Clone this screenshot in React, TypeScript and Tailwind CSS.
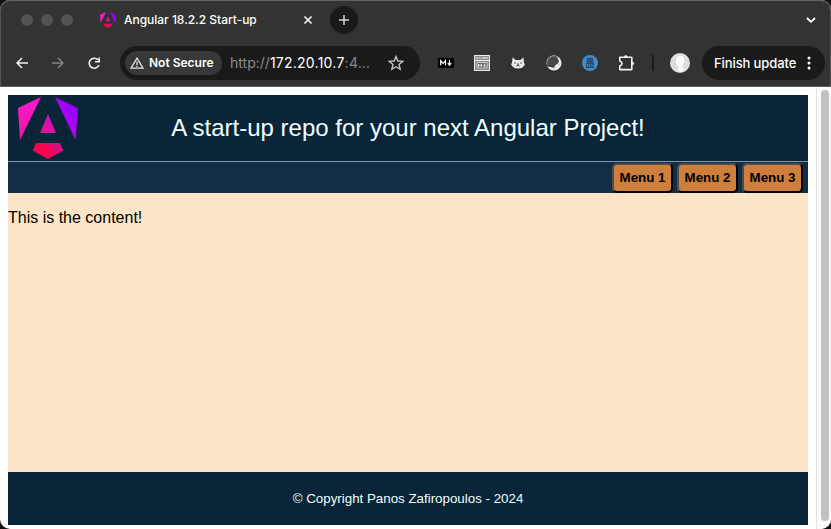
import React from "react";

function AngularMark({ id, className }: { id: string; className: string }) {
  return (
    <svg viewBox="0 0 60 62" className={className} preserveAspectRatio="none">
      <defs>
        <linearGradient id={id + "a"} x1="10" y1="50" x2="60" y2="14" gradientUnits="userSpaceOnUse">
          <stop offset="0" stopColor="#f0168f" />
          <stop offset="0.35" stopColor="#e516b4" />
          <stop offset="0.7" stopColor="#b800f5" />
          <stop offset="1" stopColor="#8f00ff" />
        </linearGradient>
        <linearGradient id={id + "c"} x1="2" y1="43" x2="14" y2="4" gradientUnits="userSpaceOnUse">
          <stop offset="0" stopColor="#f0189a" />
          <stop offset="1" stopColor="#f81ad0" />
        </linearGradient>
        <linearGradient id={id + "d"} x1="22" y1="36" x2="34" y2="18" gradientUnits="userSpaceOnUse">
          <stop offset="0" stopColor="#e4128c" />
          <stop offset="1" stopColor="#cf10c4" />
        </linearGradient>
        <linearGradient id={id + "b"} x1="22" y1="58" x2="44" y2="44" gradientUnits="userSpaceOnUse">
          <stop offset="0.35" stopColor="#f6044f" />
          <stop offset="1" stopColor="#bd12a6" />
        </linearGradient>
      </defs>
      <path fill={`url(#${id}c)`} d="M0 11 L23 0 L2 43 Z" />
      <path fill={`url(#${id}a)`} d="M37 0 L60 11 L57.5 43 Z" />
      <path fill={`url(#${id}d)`} d="M30 17 L38 36 H22 Z" />
      <path fill={`url(#${id}b)`} d="M18 46 H42 L45.5 53.5 L30 62 L14.5 53.5 Z" />
    </svg>
  );
}

function TabBar() {
  return (
    <div className="flex h-10 items-center pl-[21px] pr-[15px]">
      <div className="flex gap-2">
        <span className="size-3 rounded-full bg-[#535353]" />
        <span className="size-3 rounded-full bg-[#535353]" />
        <span className="size-3 rounded-full bg-[#535353]" />
      </div>
      <AngularMark id="tab" className="ml-[27px] h-4 w-4" />
      <span className="ml-2 w-[180px] whitespace-nowrap text-[12px] font-medium leading-4 tracking-[-0.02px] text-white">
        Angular 18.2.2 Start-up
      </span>
      <svg viewBox="0 0 8 8" className="size-2" fill="none" stroke="#e8e8e8" strokeWidth="1.6">
        <path d="M.5 .5 7.5 7.5M7.5 .5 .5 7.5" />
      </svg>
      <span className="ml-[18px] flex size-7 items-center justify-center rounded-full bg-[#1a1a1a]">
        <svg viewBox="0 0 10 10" className="size-2.5" stroke="#d6d6d6" strokeWidth="1.5">
          <path d="M5 0V10M0 5H10" />
        </svg>
      </span>
      <svg viewBox="0 0 10 6" className="ml-auto h-1.5 w-2.5" fill="none" stroke="#fff" strokeWidth="1.8">
        <path d="M1 1 5 4.8 9 1" />
      </svg>
    </div>
  );
}

function AddressBar() {
  return (
    <div className="ml-[19px] flex h-[34px] w-[300px] items-center rounded-full bg-[#1a1a1a] pl-[5px]">
      <span className="flex h-6 w-[97px] items-center rounded-full bg-[#383838] pl-[5px]">
        <svg viewBox="0 0 14 12" className="h-3 w-3.5" fill="none" stroke="#e4e4e4" strokeWidth="1.3">
          <path d="M7 1.2 13 11.2H1Z" />
          <path d="M7 4.5V8M7 8.8V10" />
        </svg>
        <span className="ml-[5px] whitespace-nowrap text-[12px] font-semibold leading-4 text-white">
          Not Secure
        </span>
      </span>
      <span className="ml-2 w-[158px] whitespace-nowrap text-[14px] leading-5 tracking-[0.01px] text-[#8d8d8d]">
        http://<span className="tracking-[0.25px] text-white">172.20.10.7</span>
        <span className="tracking-[0.3px]">:4…</span>
      </span>
      <svg viewBox="0 0 16 16" className="size-4" fill="none" stroke="#c4c4c4" strokeWidth="1.4">
        <path d="M8 1.5 9.8 6 14.8 6.3 11 9.5 12.2 14.3 8 11.7 3.8 14.3 5 9.5 1.2 6.3 6.2 6Z" />
      </svg>
    </div>
  );
}

function Extensions() {
  return (
    <div className="ml-[18px] flex items-center">
      <svg viewBox="0 0 16 10" className="h-2.5 w-4">
        <rect width="16" height="10" rx="1" fill="#000" />
        <path d="M2.7 7.3V2.7L5.1 5.4 7.5 2.7V7.3M11.5 2.3V7M9.8 5.2 11.5 7.2 13.2 5.2" fill="none" stroke="#fff" strokeWidth="1.2" />
      </svg>
      <svg viewBox="0 0 16 16" className="ml-5 size-4">
        <path d="M0 0H16V16H0Z" fill="#ececec" />
        <path d="M1 1H15V15H1Z" fill="#8b8b8b" />
        <path d="M2 3H4M5 3H7M8 3H14" stroke="#fff" strokeWidth="1.2" />
        <path d="M1 5.5H15" stroke="#eee" strokeWidth="1" />
        <path d="M3 7.5H13V13H3Z" fill="#666" stroke="#ddd" strokeWidth=".8" />
        <path d="M4.5 12V9L6 10.8 7.5 9V12M10.5 8.7V11.5M9.2 10.3 10.5 11.8 11.8 10.3" fill="none" stroke="#fff" strokeWidth=".8" />
      </svg>
      <svg viewBox="0 0 14 12" className="ml-[21px] h-3 w-3.5">
        <path d="M1.6 .5 4.7 3H9.3L12.4 .5 13 6 14 7.3 12.8 9 10.8 11 7 11.5 3.2 11 1.2 9 0 7.3 1 6Z" fill="#e9e9e9" />
        <path d="M4 5.3V6.7M10 5.3V6.7M6.3 7H7.7M5.5 9 7 8 8.5 9" fill="none" stroke="#222" />
      </svg>
      <svg viewBox="0 0 16 16" className="ml-[21px] size-4">
        <circle cx="8" cy="8" r="7.5" fill="#ededed" />
        <path d="M1 8A7 7 0 0 1 11 1.5L12 4 13 6 12 8.5 9.5 10 8.5 12.5 5 11.5 1.5 11Z" fill="#494949" />
        <path d="M1 6.2A7 7 0 0 1 9.5 1M9 10.5 8 14M12 8.5 13.5 10" fill="none" stroke="#aaa" strokeWidth=".8" />
        <path d="M1.2 10.8 3.5 11 7.5 12.2" fill="none" stroke="#151515" />
      </svg>
      <svg viewBox="0 0 16 16" className="ml-5 size-4">
        <circle cx="8" cy="8" r="8" fill="#448bcb" />
        <path d="M5.3 7V3.2H10.7V7Z" fill="#30567b" stroke="#263e56" strokeWidth=".8" />
        <path d="M4 7.4H12V13H4Z" fill="#2b4a69" />
        <path d="M5.2 12V9.2L6.3 10.5 7.4 9.2V12M10 9V11.7M9 10.5 10 11.7 11 10.5" fill="none" stroke="#448bcb" strokeWidth=".8" />
      </svg>
      <svg viewBox="0 0 18 18" className="ml-5 h-[18px] w-[18px]" fill="none" stroke="#f1f1f1" strokeWidth="1.6" strokeLinejoin="round">
        <path d="M1.8 3.2H13.8V15.6H1.8V12Q4 11.2 4 9.5T1.8 7Z" />
        <path d="M6.4 3Q6.4 1.6 7.8 1.6T9.2 3ZM14 8Q15.7 8 15.7 9.4T14 10.8Z" fill="#f1f1f1" strokeWidth=".8" />
      </svg>
    </div>
  );
}

function Toolbar() {
  return (
    <div className="flex h-[46px] items-center pl-4">
      <svg viewBox="0 0 12 12" className="size-3" fill="none" stroke="#f1f1f1" strokeWidth="1.5">
        <path d="M12 6H1M6 1 1 6 6 11" />
      </svg>
      <svg viewBox="0 0 12 12" className="ml-6 size-3" fill="none" stroke="#858585" strokeWidth="1.5">
        <path d="M0 6H11M6 1 11 6 6 11" />
      </svg>
      <svg viewBox="0 0 13 13" className="ml-6 size-[13px]" fill="none" stroke="#f1f1f1" strokeWidth="1.6">
        <path d="M10 2.9A5 5 0 1 0 10.9 8M11.2 .5V4.7H7" />
      </svg>
      <AddressBar />
      <Extensions />
      <span className="ml-4 h-4 w-0.5 bg-[#1b1b1b]" />
      <svg viewBox="0 0 20 20" className="ml-4 size-5">
        <circle cx="10" cy="10" r="10" fill="#dedede" />
        <path d="M10 3C6.5 3 5.8 5.4 6 8.4 6.2 12 8 13 8.2 14 8 17 8.5 18.7 10 19 12 19 14.2 17.5 14 15.5 12.3 15.2 12.3 14.4 12.8 12.4 15.5 8 15 3 10 3Z" fill="#f8fbfd" />
      </svg>
      <span className="ml-3 flex h-[34px] w-[123px] items-center rounded-full bg-[#1a1a1a] pl-3">
        <span className="w-[93px] whitespace-nowrap text-[13px] font-medium leading-4 tracking-[-0.1px] text-white">
          Finish update
        </span>
        <svg viewBox="0 0 4 14" className="h-3.5 w-1" fill="#fff">
          <circle cx="2" cy="2" r="1.5" />
          <circle cx="2" cy="7" r="1.5" />
          <circle cx="2" cy="12" r="1.5" />
        </svg>
      </span>
    </div>
  );
}

function MenuButton({ label }: { label: string }) {
  return (
    <button className="h-[30px] w-[61px] whitespace-nowrap rounded-[5px] border-2 border-t-[#4d4d4d] border-l-[#4d4d4d] border-r-black border-b-black bg-[#cd7f3b] text-[13.33px] font-bold leading-4 text-black">
      {label}
    </button>
  );
}

export default function App() {
  return (
    <div className="h-[529px] w-[831px] overflow-hidden bg-[#111]">
      <div className="flex h-full flex-col overflow-hidden rounded-[10px] bg-white">
        <div className="h-[87px] shrink-0 rounded-t-[10px] bg-[#333] font-[Inter,sans-serif] shadow-[inset_0_1px_0_#636363,inset_1px_0_0_#555,inset_-1px_0_0_#555,inset_0_-1px_0_#5d5d5d]">
          <TabBar />
          <Toolbar />
        </div>
        <div className="flex min-h-0 flex-1 font-['Liberation_Sans',Arial,sans-serif]">
          <main className="flex w-[816px] flex-col px-2 pb-1 pt-2">
            <header className="flex h-[67px] items-start border-b border-[#8199b0] bg-[#0a2537]">
              <AngularMark id="site" className="ml-2.5 mt-[2px] h-[62px] w-[60px]" />
              <h1 className="mr-[70px] flex-1 whitespace-nowrap pt-[18px] text-center text-[24px] leading-[30px] text-[#f0ffff]">
                A start-up repo for your next Angular Project!
              </h1>
            </header>
            <nav className="flex h-[31px] items-center justify-end gap-1 bg-[#132e44] pr-[5px] pt-px">
              <MenuButton label="Menu 1" />
              <MenuButton label="Menu 2" />
              <MenuButton label="Menu 3" />
            </nav>
            <section className="h-[279px] bg-[#fce5c6] pt-4 text-[16px] leading-[18px] text-black">
              This is the content!
            </section>
            <footer className="flex h-[53px] items-center justify-center bg-[#0a2537] text-[13.33px] text-[#f0ffff]">
              © Copyright Panos Zafiropoulos - 2024
            </footer>
          </main>
          <div className="flex w-[15px] justify-center border-l border-[#e5e5e5] bg-[#fafafa] pb-2 pl-px pt-[3px]">
            <div className="w-2 rounded-full bg-[#c1c1c1]" />
          </div>
        </div>
      </div>
    </div>
  );
}
